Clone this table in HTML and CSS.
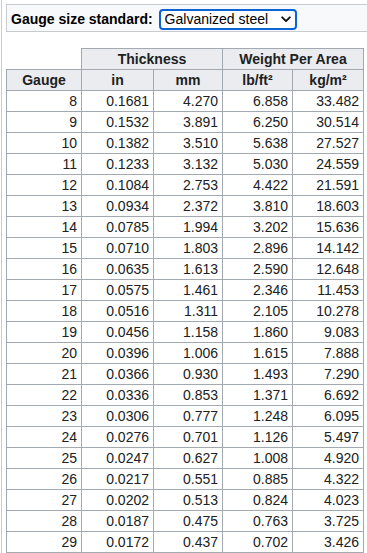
FILE: index.html
```html
<!DOCTYPE html>
<html lang="en">
<head>
<meta charset="utf-8">
<title>Gauge table</title>
<link rel="stylesheet" href="styles.css">
</head>
<body>
<div class="page">
  <div class="toolbar">
    <span class="label">Gauge size standard:</span>
    <div class="select">
      <span class="select-text">Galvanized steel</span>
      <svg class="chevron" width="10" height="7" viewBox="0 0 10 7"><path d="M1.2 1.3 L5 5.1 L8.8 1.3" fill="none" stroke="#111" stroke-width="1.9" stroke-linecap="round" stroke-linejoin="round"/></svg>
    </div>
  </div>
  <table class="gauge">
    <colgroup>
      <col class="c1"><col class="c2"><col class="c3"><col class="c4"><col class="c5">
    </colgroup>
    <thead>
      <tr>
        <th class="blank"></th>
        <th colspan="2">Thickness</th>
        <th colspan="2">Weight Per Area</th>
      </tr>
      <tr>
        <th>Gauge</th>
        <th>in</th>
        <th>mm</th>
        <th>lb/ft²</th>
        <th>kg/m²</th>
      </tr>
    </thead>
    <tbody>
      <tr><td>8</td><td>0.1681</td><td>4.270</td><td>6.858</td><td>33.482</td></tr>
      <tr><td>9</td><td>0.1532</td><td>3.891</td><td>6.250</td><td>30.514</td></tr>
      <tr><td>10</td><td>0.1382</td><td>3.510</td><td>5.638</td><td>27.527</td></tr>
      <tr><td>11</td><td>0.1233</td><td>3.132</td><td>5.030</td><td>24.559</td></tr>
      <tr><td>12</td><td>0.1084</td><td>2.753</td><td>4.422</td><td>21.591</td></tr>
      <tr><td>13</td><td>0.0934</td><td>2.372</td><td>3.810</td><td>18.603</td></tr>
      <tr><td>14</td><td>0.0785</td><td>1.994</td><td>3.202</td><td>15.636</td></tr>
      <tr><td>15</td><td>0.0710</td><td>1.803</td><td>2.896</td><td>14.142</td></tr>
      <tr><td>16</td><td>0.0635</td><td>1.613</td><td>2.590</td><td>12.648</td></tr>
      <tr><td>17</td><td>0.0575</td><td>1.461</td><td>2.346</td><td>11.453</td></tr>
      <tr><td>18</td><td>0.0516</td><td>1.311</td><td>2.105</td><td>10.278</td></tr>
      <tr><td>19</td><td>0.0456</td><td>1.158</td><td>1.860</td><td>9.083</td></tr>
      <tr><td>20</td><td>0.0396</td><td>1.006</td><td>1.615</td><td>7.888</td></tr>
      <tr><td>21</td><td>0.0366</td><td>0.930</td><td>1.493</td><td>7.290</td></tr>
      <tr><td>22</td><td>0.0336</td><td>0.853</td><td>1.371</td><td>6.692</td></tr>
      <tr><td>23</td><td>0.0306</td><td>0.777</td><td>1.248</td><td>6.095</td></tr>
      <tr><td>24</td><td>0.0276</td><td>0.701</td><td>1.126</td><td>5.497</td></tr>
      <tr><td>25</td><td>0.0247</td><td>0.627</td><td>1.008</td><td>4.920</td></tr>
      <tr><td>26</td><td>0.0217</td><td>0.551</td><td>0.885</td><td>4.322</td></tr>
      <tr><td>27</td><td>0.0202</td><td>0.513</td><td>0.824</td><td>4.023</td></tr>
      <tr><td>28</td><td>0.0187</td><td>0.475</td><td>0.763</td><td>3.725</td></tr>
      <tr><td>29</td><td>0.0172</td><td>0.437</td><td>0.702</td><td>3.426</td></tr>
    </tbody>
  </table>
</div>
</body>
</html>
```
FILE: styles.css
```css
html, body {
  margin: 0;
  padding: 0;
  background: #fff;
  overflow: hidden;
}
body {
  font-family: "Liberation Sans", Arial, sans-serif;
  font-size: 14px;
  color: #202122;
}
.page {
  margin-left: 1px;
  border-left: 1px solid #c8ccd1;
  padding: 4px 0 0 4px;
  min-height: 553px;
  box-sizing: border-box;
}
.toolbar {
  height: 28px;
  box-sizing: border-box;
  border: 1px solid #c8ccd1;
  border-right: none;
  background: #f8f9fa;
  display: flex;
  align-items: center;
  padding: 2px 0 0 4px;
}
.label {
  font-weight: bold;
  color: #000;
}
.select {
  margin-left: 6px;
  width: 138px;
  height: 21px;
  box-sizing: border-box;
  border: 2px solid #0b63d6;
  border-radius: 4px;
  background: #fff;
  display: flex;
  align-items: center;
  justify-content: space-between;
  padding: 0 4px 0 4px;
  color: #000;
}
.chevron {
  display: block;
}
.gauge {
  margin-top: 16px;
  border-collapse: collapse;
  table-layout: fixed;
  width: 358px;
}
.c1 { width: 75px; }
.c2 { width: 72px; }
.c3 { width: 69px; }
.c4 { width: 70px; }
.c5 { width: 71px; }
.gauge th,
.gauge td {
  border: 1px solid #a2a9b1;
  padding: 2px 4px;
  line-height: 16px;
  height: 16px;
}
.gauge th {
  background: #eaecf0;
  font-weight: bold;
  text-align: center;
}
.gauge th.blank {
  border: none;
  background: #fff;
}
.gauge td {
  text-align: right;
}
```
